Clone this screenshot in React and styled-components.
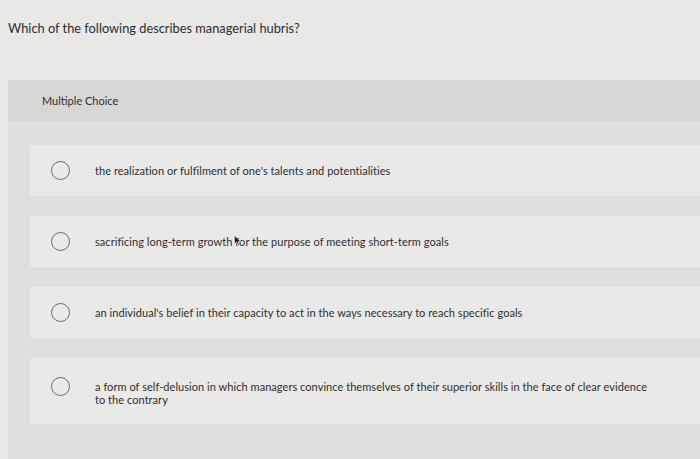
import React from 'react';
import styled, { createGlobalStyle } from 'styled-components';

const GlobalStyle = createGlobalStyle`
    html, body {
        margin: 0;
        padding: 0;
        background: #e6e6e3;
    }
`;

const Page = styled.div`
    width: 700px;
    height: 459px;
    overflow: hidden;
    background: #e8e8e6;
    font-family: Lato, "Liberation Sans", sans-serif;
    color: #2e2e2e;
`;

const Question = styled.div`
    padding: 20px 8px 0 8px;
    height: 80px;
    box-sizing: border-box;
    font-size: 12.8px;
    line-height: 16px;
`;

const Panel = styled.section`
    margin-left: 8px;
    background: #dfe0dd;
    height: 379px;
`;

const PanelHeader = styled.div`
    height: 41px;
    display: flex;
    align-items: center;
    padding-left: 34px;
    background: #d7d8d5;
    font-size: 11px;
`;

const Options = styled.div`
    display: flex;
    flex-direction: column;
    gap: 20px;
    padding: 24px 0 0 22px;
`;

const Card = styled.label`
    display: flex;
    align-items: flex-start;
    gap: 25px;
    padding: ${p => (p.$tall ? '19px 0 18px 21px' : '16px 0 16px 21px')};
    background: #e9e9e7;
`;

const Radio = styled.span`
    flex: none;
    width: 17px;
    height: 17px;
    border-radius: 50%;
    border: 1.6px solid #6a6a6a;
`;

const Text = styled.span`
    max-width: 556px;
    margin-top: 4px;
    font-size: 11px;
    line-height: 12.5px;
    letter-spacing: 0.05px;
`;

const Covered = styled.span`
    position: relative;
`;

const Cursor = styled.svg`
    position: absolute;
    left: -1px;
    top: 0;
    width: 7px;
    height: 11px;
`;

const options = [
    { text: "the realization or fulfilment of one's talents and potentialities" },
    { text: 'sacrificing long-term growth ', covered: 'f', rest: 'or the purpose of meeting short-term goals' },
    { text: "an individual's belief in their capacity to act in the ways necessary to reach specific goals" },
    {
        text: 'a form of self-delusion in which managers convince themselves of their superior skills in the face of clear evidence to the contrary',
        tall: true,
    },
];

const App = () => (
    <>
        <GlobalStyle />
        <Page>
            <Question>Which of the following describes managerial hubris?</Question>

            <Panel>
                <PanelHeader>Multiple Choice</PanelHeader>

                <Options>
                    {options.map(o => (
                        <Card key={o.text} $tall={o.tall}>
                            <Radio />
                            <Text>
                                {o.text}
                                {o.covered && (
                                    <Covered>
                                        {o.covered}
                                        <Cursor viewBox="0 0 7 11">
                                            <path d="M0.5 0.5 L0.5 9 L2.6 7 L4 10.5 L5.3 10 L4 6.6 L6.6 6.6 Z" fill="#1a1a1a" stroke="#f0f0f0" strokeWidth="0.6" />
                                        </Cursor>
                                    </Covered>
                                )}
                                {o.rest}
                            </Text>
                        </Card>
                    ))}
                </Options>
            </Panel>
        </Page>
    </>
);

export default App;
